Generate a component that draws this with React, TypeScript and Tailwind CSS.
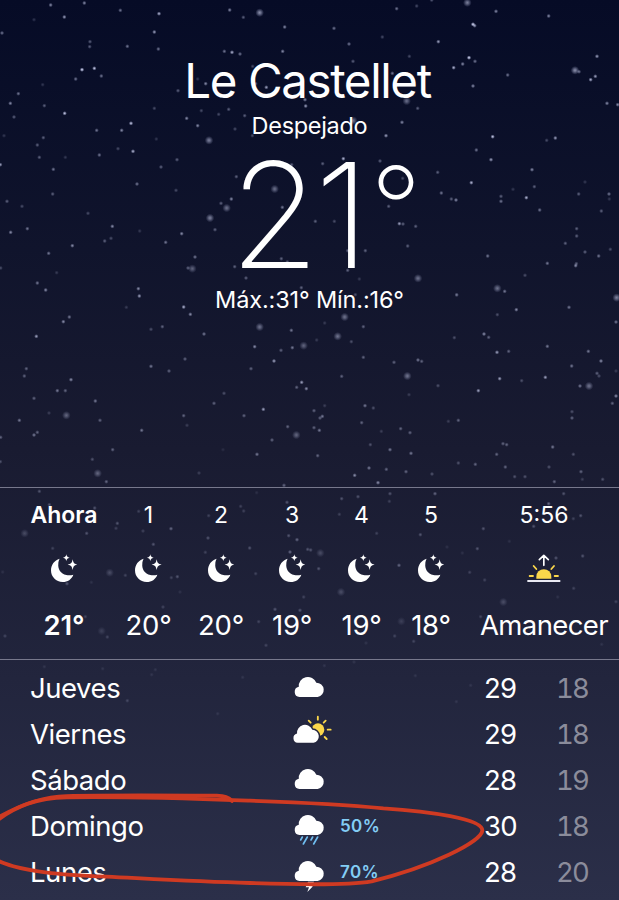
import React from 'react';

interface Hour {
  label: string;
  temp: string;
  width: string;
  icon: 'moon' | 'sunrise';
  now?: boolean;
}

interface Day {
  name: string;
  icon: 'cloud' | 'partly' | 'rain' | 'storm';
  rain?: string;
  high: number;
  low: number;
}

const hours: Hour[] = [
  { label: 'Ahora', temp: '21°', width: 'w-[67px]', icon: 'moon', now: true },
  { label: '1', temp: '20°', width: 'w-[43px]', icon: 'moon' },
  { label: '2', temp: '20°', width: 'w-[43px]', icon: 'moon' },
  { label: '3', temp: '19°', width: 'w-[40px]', icon: 'moon' },
  { label: '4', temp: '19°', width: 'w-[40px]', icon: 'moon' },
  { label: '5', temp: '18°', width: 'w-[40px]', icon: 'moon' },
  { label: '5:56', temp: 'Amanecer', width: 'w-[127px]', icon: 'sunrise' },
];

const days: Day[] = [
  { name: 'Jueves', icon: 'cloud', high: 29, low: 18 },
  { name: 'Viernes', icon: 'partly', high: 29, low: 18 },
  { name: 'Sábado', icon: 'cloud', high: 28, low: 19 },
  { name: 'Domingo', icon: 'rain', rain: '50%', high: 30, low: 18 },
  { name: 'Lunes', icon: 'storm', rain: '70%', high: 28, low: 20 },
];

// x, y, brightness (0-10); 3 units per pixel, grouped by patch of sky
const sky: { x: number; y: number; small: number[][]; large: number[][] }[] = [
  {
    x: 0,
    y: 0,
    small: [
      [152, 15, 6], [253, 9, 6], [361, 31, 5], [193, 51, 7], [102, 59, 2], [477, 41, 8], [6, 99, 5], [463, 96, 7],
      [270, 125, 4], [269, 140, 4], [382, 139, 5], [475, 147, 5], [689, 30, 6], [730, 52, 4], [854, 81, 6],
      [673, 154, 5], [696, 157, 8], [720, 162, 5], [848, 154, 6], [246, 209, 10], [283, 205, 9], [304, 228, 5],
      [227, 237, 5], [128, 254, 2], [55, 281, 5], [31, 310, 6], [133, 317, 4], [42, 351, 4], [194, 340, 9],
      [463, 325, 3], [534, 272, 4], [593, 237, 2], [617, 251, 6], [767, 251, 4], [799, 262, 7], [758, 199, 3],
      [560, 355, 6], [604, 332, 3], [656, 343, 3], [686, 328, 4], [734, 347, 4], [593, 377, 6], [705, 387, 3],
      [757, 407, 3], [393, 370, 9], [365, 391, 6], [290, 391, 5], [12, 407, 2], [130, 413, 4], [112, 435, 4],
      [118, 472, 4], [196, 472, 2], [298, 465, 5], [354, 446, 3], [399, 454, 8], [469, 417, 2], [1, 494, 7],
      [160, 508, 5], [483, 501, 4], [531, 479, 4], [411, 552, 5], [528, 571, 3], [158, 582, 4], [21, 604, 4],
      [66, 619, 3], [264, 640, 3], [337, 679, 6], [419, 693, 2], [32, 697, 6], [82, 686, 5], [314, 723, 4],
      [333, 715, 3], [217, 737, 6], [146, 760, 5], [497, 727, 5], [545, 701, 6], [645, 689, 4], [663, 610, 4],
      [694, 597, 6], [709, 530, 4], [847, 622, 5], [875, 494, 4], [915, 299, 6], [917, 318, 7], [585, 771, 5],
      [564, 804, 4], [704, 800, 4], [844, 776, 4], [862, 786, 4], [738, 834, 4], [904, 863, 4], [2, 804, 3],
      [170, 818, 2], [112, 849, 5], [137, 870, 6], [415, 866, 6],
    ],
    large: [[779, 38, 8], [627, 421, 7], [824, 567, 6], [680, 624, 6], [630, 654, 7], [577, 806, 5]],
  },
  {
    x: 930,
    y: 0,
    small: [
      [260, 26, 5], [320, 18, 3], [365, 0, 4], [558, 34, 6], [716, 48, 6], [489, 73, 10], [494, 77, 7], [72, 85, 5],
      [217, 111, 3], [385, 125, 7], [117, 132, 5], [298, 169, 3], [129, 184, 4], [477, 173, 10], [495, 184, 5],
      [458, 192, 6], [431, 203, 8], [593, 225, 5], [489, 258, 6], [861, 169, 7], [807, 215, 5], [856, 229, 7],
      [842, 239, 8], [891, 310, 6], [923, 314, 6], [247, 220, 5], [323, 325, 4], [276, 367, 6], [228, 407, 7],
      [548, 410, 9], [710, 421, 3], [736, 414, 7], [499, 450, 5], [543, 479, 7], [666, 509, 6], [38, 491, 4],
      [100, 476, 8], [210, 483, 4], [278, 535, 3], [383, 517, 4], [484, 548, 8], [394, 579, 5], [424, 597, 4],
      [438, 600, 6], [573, 589, 4], [573, 604, 5], [649, 593, 8], [673, 560, 4], [609, 568, 2], [825, 546, 2],
      [806, 582, 4], [897, 582, 5], [898, 597, 2], [689, 630, 5], [874, 633, 4], [236, 619, 4], [16, 664, 4],
      [73, 664, 3], [268, 671, 7], [279, 672, 4], [317, 679, 4], [800, 686, 4], [800, 708, 4], [766, 730, 4],
      [825, 756, 4], [866, 768, 5], [901, 748, 3], [113, 752, 4], [166, 752, 4], [293, 738, 4], [533, 768, 5],
      [712, 790, 5], [797, 797, 6], [799, 791, 4], [645, 826, 3], [113, 811, 4], [148, 837, 2], [440, 884, 3],
      [584, 874, 5], [136, 884, 3],
    ],
    large: [[472, 8, 7], [795, 211, 8], [290, 303, 6], [130, 362, 6], [324, 835, 6], [562, 865, 6], [920, 893, 7]],
  },
  {
    x: 0,
    y: 870,
    small: [
      [418, 18, 7], [379, 52, 2], [551, 51, 8], [571, 73, 6], [208, 81, 5], [190, 95, 6], [453, 118, 3],
      [487, 110, 4], [109, 139, 7], [612, 132, 5], [764, 170, 6], [874, 121, 5], [843, 181, 4], [877, 173, 5],
      [822, 213, 7], [753, 236, 4], [555, 207, 4], [453, 229, 5], [507, 243, 4], [79, 236, 4], [73, 258, 4],
      [213, 269, 6], [172, 302, 5], [196, 302, 4], [102, 325, 4], [286, 333, 5], [905, 277, 7], [890, 292, 4],
      [919, 296, 6], [672, 310, 3], [642, 340, 4], [147, 369, 2], [58, 391, 5], [300, 391, 4], [551, 377, 4],
      [561, 406, 2], [732, 377, 4], [790, 358, 7], [425, 421, 5], [112, 427, 4], [102, 435, 5], [2, 442, 4],
      [863, 410, 4], [816, 450, 4], [771, 493, 5], [338, 479, 4], [277, 508, 3], [1, 515, 3], [669, 479, 1],
      [319, 575, 4], [597, 549, 2], [852, 586, 4], [118, 604, 3], [770, 608, 1],
    ],
    large: [[779, 111, 6], [911, 167, 5], [199, 376, 5], [889, 435, 5], [293, 550, 5]],
  },
  {
    x: 930,
    y: 870,
    small: [
      [440, 15, 3], [619, 59, 6], [562, 74, 3], [777, 52, 5], [918, 96, 5], [44, 99, 2], [160, 110, 4], [20, 150, 2],
      [124, 155, 3], [522, 132, 6], [536, 142, 4], [433, 143, 3], [561, 187, 7], [596, 184, 4], [712, 169, 5],
      [835, 184, 5], [873, 213, 6], [785, 228, 5], [160, 202, 4], [252, 217, 4], [324, 210, 5], [335, 214, 4],
      [861, 250, 4], [867, 258, 3], [918, 243, 2], [95, 259, 4], [569, 266, 7], [706, 262, 7], [635, 272, 3],
      [384, 287, 3], [505, 302, 7], [810, 288, 5], [918, 318, 6], [907, 340, 4], [297, 314, 2], [44, 347, 2],
      [165, 347, 5], [190, 354, 3], [12, 362, 4], [30, 384, 4], [37, 379, 5], [786, 365, 3], [786, 384, 4],
      [445, 391, 4], [415, 394, 2], [155, 398, 4], [12, 413, 4], [28, 421, 5], [272, 416, 4], [300, 428, 4],
      [214, 424, 2], [181, 464, 3], [240, 479, 5], [303, 490, 5], [23, 497, 4], [579, 461, 4], [590, 464, 4],
      [560, 493, 4], [728, 471, 5], [790, 493, 3], [445, 519, 3], [496, 523, 4], [177, 534, 5], [229, 538, 4],
      [288, 545, 4], [134, 556, 6], [204, 578, 6], [366, 552, 3], [586, 531, 4], [717, 531, 3], [614, 560, 3],
      [645, 560, 3], [733, 575, 4], [813, 545, 4], [817, 568, 2], [878, 568, 3], [95, 626, 3], [144, 620, 3],
      [240, 611, 3], [375, 611, 4], [761, 611, 3],
    ],
    large: [[104, 81, 6], [83, 139, 6], [292, 258, 6], [837, 288, 6]],
  },
  {
    x: 0,
    y: 1440,
    small: [
      [148, 74, 3], [284, 84, 3], [352, 130, 3], [348, 145, 2], [260, 160, 3], [429, 153, 2], [513, 146, 4],
      [460, 193, 3], [158, 205, 2], [624, 174, 3], [616, 217, 2], [722, 79, 2], [731, 93, 2], [861, 67, 3],
      [626, 107, 2], [416, 94, 2], [891, 179, 4], [866, 167, 3], [749, 204, 3], [870, 216, 4], [923, 208, 3],
      [376, 286, 2], [514, 293, 2], [532, 290, 3], [201, 311, 3], [274, 307, 1], [767, 281, 2], [540, 336, 1],
      [489, 381, 2], [825, 388, 3], [900, 391, 3], [911, 351, 2], [322, 471, 2], [15, 468, 2], [798, 496, 2],
      [776, 425, 2], [8, 276, 1], [256, 410, 2],
    ],
    large: [[74, 160, 3], [329, 278, 3], [305, 453, 2]],
  },
  {
    x: 930,
    y: 1440,
    small: [
      [238, 64, 2], [88, 103, 2], [200, 160, 2], [331, 164, 3], [520, 146, 3], [716, 71, 4], [671, 139, 3],
      [790, 116, 2], [812, 107, 3], [598, 184, 1], [502, 206, 3], [411, 201, 1], [457, 219, 1], [267, 256, 4],
      [26, 266, 3], [2, 210, 3], [738, 234, 3], [818, 228, 3], [479, 277, 2], [524, 300, 2], [791, 325, 2],
      [918, 365, 2], [743, 351, 1], [254, 468, 2], [311, 484, 2], [512, 410, 2], [168, 489, 1], [875, 493, 1],
    ],
    large: [[31, 219, 3], [93, 336, 3], [580, 366, 3], [274, 424, 2]],
  },
  {
    x: 0,
    y: 1980,
    small: [
      [133, 20, 1], [308, 26, 1], [466, 29, 1], [455, 44, 1], [382, 122, 2], [653, 161, 1], [728, 52, 1],
      [973, 17, 1], [1062, 6, 1], [1246, 47, 1], [1369, 125, 1], [1412, 76, 1],
    ],
    large: [],
  },
];

const Stars: React.FC = () => (
  <svg className="pointer-events-none absolute inset-0 h-[900px] w-[619px]" viewBox="0 0 1857 2700">
    <defs>
      <radialGradient id="star">
        <stop offset="0" stopColor="#dfe3ff" />
        <stop offset="0.35" stopColor="#cdd2f2" stopOpacity="0.75" />
        <stop offset="1" stopColor="#aab0d8" stopOpacity="0" />
      </radialGradient>
    </defs>
    {sky.map((patch, i) => (
      <g key={i} transform={`translate(${patch.x} ${patch.y})`} fill="url(#star)">
        {patch.small.map(([x, y, b]) => (
          <circle key={`${x}-${y}`} cx={x} cy={y} r="6.8" opacity={b / 10} />
        ))}
        {patch.large.map(([x, y, b]) => (
          <circle key={`${x}-${y}`} cx={x} cy={y} r="13" opacity={b / 13} />
        ))}
      </g>
    ))}
  </svg>
);

const Moon: React.FC = () => (
  <svg className="h-7 w-[26.67px]" viewBox="0 0 80 84" fill="#fff">
    <path d="M26 14C10 19 0 32 0 49c0 20 15 35 35 35 15 0 27-8 32-22-6 2-14 3-21 1-17-4-26-18-24-34 0-6 2-11 4-15Z" />
    <path d="M46 1c1.500 7 3 8.500 10 10-7 1.500-8.500 3-10 10-1.500-7-3-8.500-10-10 7-1.500 8.500-3 10-10Z" />
    <path d="M65 16c2.500 12 4 13.500 15 16-11 2.500-12.500 4-15 16-2.500-12-4-13.500-15-16 11-2.500 12.500-4 15-16Z" />
  </svg>
);

const Sunrise: React.FC = () => (
  <svg className="h-7 w-[33.67px]" viewBox="0 0 101 84" fill="none" strokeLinecap="round">
    <path d="M50.500 34V6M37 17 50.500 4 64 17" stroke="#fff" strokeWidth="5" strokeLinejoin="round" />
    <path d="M28 74v-6a22.500 22.500 0 0 1 45 0v6Z" fill="#fbd74b" />
    <path d="M8 66h10M83 66h10M20 36l8 9M81 36l-8 9" stroke="#fbd74b" strokeWidth="5.500" />
    <path d="M1 81h99" stroke="#e9e9f2" strokeWidth="6" strokeLinecap="butt" />
  </svg>
);

const cloudPath = 'M16 59A15.500 15.500 0 0 1 14 28.500A26.500 26.500 0 0 1 65 16A21.700 21.700 0 0 1 69 59Z';

const DayIcon: React.FC<{ icon: Day['icon'] }> = ({ icon }) => (
  <svg className="h-[46px] w-10" viewBox="0 6 120 138" fill="none">
    {icon === 'partly' ? (
      <>
        <circle cx="78" cy="62" r="19" fill="#fbd74b" />
        <path
          d="M77.500 23v9M101 35l-6 6M107 62h9M98 84l6 6M50 35l6 6"
          stroke="#fbd74b"
          strokeWidth="5.500"
          strokeLinecap="round"
        />
        <g transform="translate(2.500 48) scale(.9 .9)">
          <path d={cloudPath} fill="#fff" stroke="#24263d" strokeWidth="10" paintOrder="stroke" />
        </g>
      </>
    ) : (
      <path d={cloudPath} transform="translate(6 43) scale(1.03 1)" fill="#fff" />
    )}
    {icon === 'rain' && (
      <path
        d="M31 108l-5 9M46 108l-12 21M62 108l-5 9M77 108l-12 21"
        stroke="#6fbdf0"
        strokeWidth="5"
        strokeLinecap="round"
      />
    )}
    {icon === 'storm' && <path d="M48 104h18l-6 14h3L46 135l5-14h-10Z" fill="#fff" />}
  </svg>
);

const Scribble: React.FC = () => (
  <svg
    className="pointer-events-none absolute bottom-0 left-0 h-[120px] w-[619px]"
    viewBox="0 360 1857 360"
    fill="none"
    stroke="#cf3a22"
    strokeLinecap="round"
  >
    <path
      d="M696 423C686 411 674 408 650 407 480 406 330 405 200 408 120 410 50 440 -8 474"
      strokeWidth="11"
    />
    <path
      d="M-10 482C50 438 110 414 200 412C400 409 560 415 750 422C900 427 1050 435 1150 445C1290 454 1447 477 1447 511C1447 545 1290 622 1115 664C1040 677 900 674 750 669C590 665 460 657 320 650C200 645 60 637 -12 599"
      strokeWidth="11.500"
    />
  </svg>
);

const App: React.FC = () => {
  return (
    <div className="relative flex h-[900px] w-[619px] flex-col overflow-hidden bg-linear-to-b from-[#060b26] via-[#191b31] to-[#2b2f49] font-[Inter,sans-serif] text-white">
      <Stars />

      <header className="relative flex h-[487px] flex-col items-center pt-[50px]">
        <h1 className="pr-1 text-[47.500px] leading-[62px] tracking-[-1.4px]">Le Castellet</h1>
        <p className="mt-[1px] text-[23.500px] leading-[26px] tracking-[-0.3px]">Despejado</p>
        <div className="mt-[3px] flex h-[146px] pl-[32px] text-[146px] leading-[146px] font-extralight">
          <span className="tracking-[-5px]">21</span>
          <span className="mt-[-8px] ml-[5px] text-[113px]">°</span>
        </div>
        <p className="mt-[-1px] text-[23.500px] leading-[26px] tracking-[-0.15px]">Máx.:31° Mín.:16°</p>
      </header>

      <section className="relative flex h-[173px] gap-[29.500px] border-y border-[#77788c] pl-[30.500px]">
        {hours.map((hour) => (
          <div
            key={hour.label}
            className={`flex shrink-0 flex-col items-center whitespace-nowrap ${hour.width} ${hour.now ? 'font-semibold' : ''}`}
          >
            <span className="mt-[13px] text-[23px] leading-7">{hour.label}</span>
            <div className="mt-[25px] h-7">{hour.icon === 'moon' ? <Moon /> : <Sunrise />}</div>
            <span
              className={`mt-[27px] text-[27.500px] leading-8 ${hour.icon === 'sunrise' ? 'tracking-[-0.6px]' : 'tracking-[-0.2px]'}`}
            >
              {hour.temp}
            </span>
          </div>
        ))}
      </section>

      <section className="relative flex flex-col pt-[5px] text-[27.500px]">
        {days.map((day) => (
          <div key={day.name} className="flex h-[46px] shrink-0 items-center pr-[31px] pl-[30px]">
            <span className="w-[262px] pt-[1px] tracking-[-0.45px]">{day.name}</span>
            <DayIcon icon={day.icon} />
            <span className="w-[152px] pt-[1px] pl-2 text-[17px] font-semibold tracking-[0.4px] text-[#83cdf5]">
              {day.rain}
            </span>
            <span className="w-[50px] pt-[1px] tracking-[-0.8px]">{day.high}</span>
            <span className="grow pt-[1px] text-right tracking-[-1.8px] text-[#8b8c9b] tabular-nums">{day.low}</span>
          </div>
        ))}
      </section>

      <Scribble />
    </div>
  );
};

export default App;
